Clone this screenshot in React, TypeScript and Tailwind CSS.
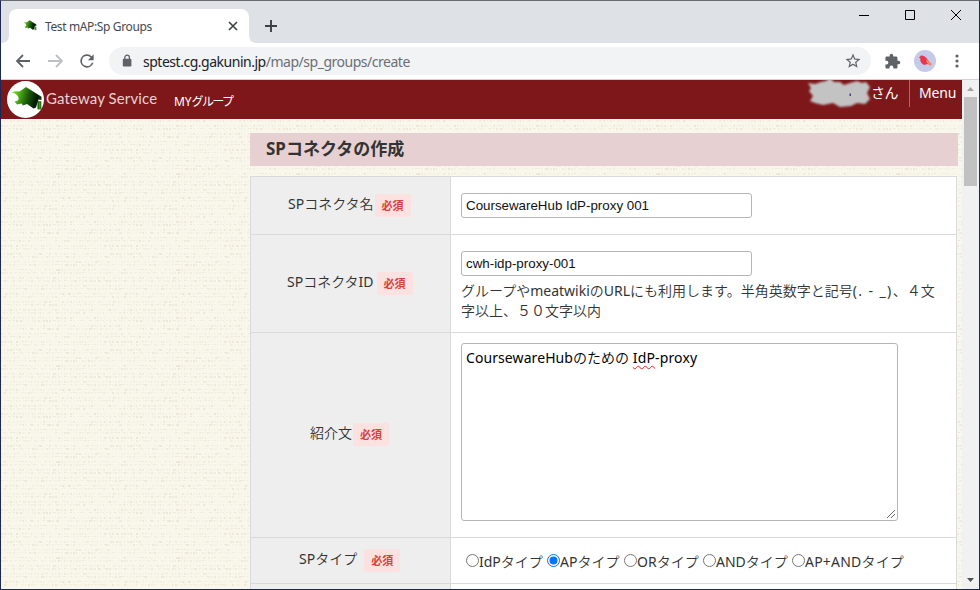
import type { ReactNode } from "react";

const jp = "font-['Noto_Sans','Noto_Sans_CJK_JP',sans-serif]";

// Latin runs stay at regular weight while the kana and kanji are drawn thinner.
function Mixed({ text, latin = "" }: { text: string; latin?: string }) {
  return (
    <>
      {text.split(/([ -~]+)/).map((part, i) =>
        i % 2 ? <span key={i} className={`font-normal ${latin}`}>{part}</span> : part,
      )}
    </>
  );
}

function Cap({ className = "" }: { className?: string }) {
  return (
    <svg viewBox="0 0 32 26" className={className}>
      <defs>
        <linearGradient id="cap" x1="0" x2="1" y1="0.3" y2="0.5">
          <stop offset="0" stopColor="#8ae62a" />
          <stop offset="0.25" stopColor="#4fae16" />
          <stop offset="0.55" stopColor="#1c5c0c" />
          <stop offset="0.85" stopColor="#031a06" />
          <stop offset="1" stopColor="#0d380c" />
        </linearGradient>
        <linearGradient id="tassel">
          <stop offset="0" stopColor="#0b3d0b" />
          <stop offset="0.6" stopColor="#3fa31a" />
          <stop offset="1" stopColor="#0d4a0d" />
        </linearGradient>
      </defs>
      <path
        d="M0.500 5.500Q4 3.500 8.500 4.500L15 0L30.500 9.700V13L27.500 12.500L25 20.500L22.500 21.500L16 17L12 18.500L10.500 16.500L6 17.500L3.500 14.500Q8.500 14 7.500 10.500Q5.500 5.800 0.500 5.500Z"
        fill="url(#cap)"
      />
      <rect x="26.500" y="14" width="3.800" height="8.500" rx="1" fill="url(#tassel)" />
    </svg>
  );
}

function TitleBar() {
  return (
    <div className="flex h-[42px] shrink-0 bg-[#dee1e6]">
      <div className="flex h-full items-end">
        <svg width="8" height="8"><path d="M8 0V8H0Q8 8 8 0Z" fill="#fff" /></svg>
      </div>
      <div className="mt-2 flex h-[34px] w-[240px] items-center rounded-t-lg bg-white pl-[14px] pr-[11px]">
        <Cap className="mr-[8px] h-[12px] w-[14px]" />
        <span className="flex-1 whitespace-nowrap pt-px font-['Noto_Sans'] text-[12px] tracking-[-0.37px] text-[#45494d]">
          Test mAP:Sp Groups
        </span>
        <svg width="10" height="10" stroke="#3c4043" strokeWidth="1.6"><path d="M1 1L9 9M9 1L1 9" /></svg>
      </div>
      <div className="flex h-full items-end">
        <svg width="8" height="8"><path d="M0 0V8H8Q0 8 0 0Z" fill="#fff" /></svg>
      </div>
      <svg width="12" height="12" className="ml-[8px] mt-[19px]" stroke="#3c4043" strokeWidth="1.9"><path d="M6 0V12M0 6H12" /></svg>
      <div className="flex-1" />
      <svg width="102" height="12" viewBox="-2 0 102 12" className="mr-[18px] mt-[8px]" fill="none" stroke="#000">
        <path d="M-2 6.5H8M44.5 1.5h9v9h-9zM90 1L100 11M100 1L90 11" />
      </svg>
    </div>
  );
}

function AddressBar() {
  return (
    <div className="flex h-[37px] shrink-0 items-center border-b border-[#d0d2d5] bg-white">
      <svg width="76" height="16" className="ml-[14px]" fill="none" strokeWidth="1.8">
        <path d="M15 8H2.5M8 2L2 8L8 14" stroke="#5f6368" />
        <path d="M33 8H46.5M41 2L47 8L41 14" stroke="#bdbfc1" />
      </svg>
      <svg width="20" height="20" viewBox="0 0 24 24" fill="#5f6368" className="-ml-[14px]">
        <path d="M17.65 6.35A8 8 0 1 0 19.73 14h-2.08A6 6 0 1 1 12 6c1.66 0 3.14.69 4.22 1.78L13 11h7V4z" />
      </svg>
      <div className="ml-[12px] flex h-[28px] w-[762px] items-center rounded-full bg-[#f1f3f4] pl-[12px] pr-[9px]">
        <svg width="12" height="14" viewBox="0 0 12 14">
          <rect x="1.8" y="4.8" width="8.6" height="7.6" rx="1" fill="#5f6368" />
          <path d="M3.8 5V3.5a2.3 2.3 0 0 1 4.6 0V5" fill="none" stroke="#5f6368" strokeWidth="1.3" />
        </svg>
        <span className="ml-[10px] flex-1 whitespace-nowrap font-['Noto_Sans'] text-[14px] tracking-[-0.48px] text-[#202124]">
          sptest.cg.gakunin.jp<span className="text-[#6b6f74]">/map/sp_groups/create</span>
        </span>
        <svg width="18" height="18" viewBox="0 0 24 24" fill="#5f6368">
          <path d="M22 9.24l-7.19-.62L12 2 9.19 8.63 2 9.24l5.46 4.73L5.82 21 12 17.27 18.18 21l-1.63-7.03L22 9.24zM12 15.4l-3.76 2.27 1-4.28-3.32-2.88 4.38-.38L12 6.1l1.71 4.04 4.38.38-3.32 2.88 1 4.28L12 15.4z" />
        </svg>
      </div>
      <svg width="17" height="17" viewBox="0 0 24 24" fill="#5f6368" className="ml-[13px]">
        <path d="M20.5 11H19V7c0-1.1-.9-2-2-2h-4V3.500a2.500 2.500 0 0 0-5 0V5H4c-1.100 0-2 .9-2 2v3.800h1.500a2.700 2.700 0 0 1 0 5.400H2V20c0 1.100.9 2 2 2h3.800v-1.500a2.700 2.700 0 0 1 5.400 0V22H17c1.100 0 2-.9 2-2v-4h1.500a2.500 2.500 0 0 0 0-5z" />
      </svg>
      <svg width="22" height="22" viewBox="0 0 22 22" className="ml-[13px]">
        <circle cx="11" cy="11" r="11" fill="#c5cae9" />
        <path d="M5 7.500L7 5.500Q10 5 12.500 8L15 11.500L17.500 14L16.500 15.500L14 14L10 15Q6 13 6.300 8.500Z" fill="#e8354d" />
        <path d="M12 9L17.500 14L16.500 15.500L13 13Z" fill="#ff8a50" />
      </svg>
      <svg width="4" height="14" className="ml-[19px]" fill="#5f6368">
        <circle cx="2" cy="2" r="1.600" /><circle cx="2" cy="7" r="1.600" /><circle cx="2" cy="12" r="1.600" />
      </svg>
    </div>
  );
}

function SiteHeader() {
  return (
    <header className="flex h-[39px] shrink-0 bg-[#7d171a] text-white">
      <div className="ml-[6px] mt-px flex h-[37px] w-[37px] items-start justify-center rounded-full bg-white">
        <Cap className="ml-[3px] mt-[6px] h-[26px] w-[32px] shrink-0" />
      </div>
      <span className="ml-[2px] mt-[8px] w-[112px] whitespace-nowrap font-[Lato] text-[15px] leading-5 tracking-[0.12px] text-[#e8d2d2]">
        Gateway Service
      </span>
      <span className={`ml-[16px] mt-[12px] whitespace-nowrap text-[12px] leading-5 tracking-[-0.1px] ${jp}`}>
        MY<span className="tracking-[-1.6px]">グループ</span>
      </span>
      <div className="flex-1" />
      <svg width="66" height="32" viewBox="0 0 66 32" className="relative z-10 -mt-px overflow-visible">
        <defs>
          <filter id="soft"><feGaussianBlur stdDeviation="0.9" /></filter>
        </defs>
        <path
          filter="url(#soft)"
          fill="#c3c3c3"
          d="M2 4L9 5L15 3L20 2L24 -1L28 3L34 3L38 6L44 4L51 2L56 4L60 3L64 8L61 14L64 20L59 25L51 24L45 27L34 28L27 24L17 26L9 24L4 22L7 17L3 12L5 9Z"
        />
        <rect x="43.500" y="14.500" width="1.500" height="2.500" fill="#43418a" />
      </svg>
      <span className={`-ml-px mt-[3px] whitespace-nowrap text-[14px] leading-5 tracking-[-0.5px] ${jp}`}>さん</span>
      <div className="ml-[11px] h-[27px] w-px bg-[#aa6a6c]" />
      <span className={`ml-[9px] mr-[6px] mt-[3px] w-[37px] whitespace-nowrap text-[14px] leading-5 tracking-[-0.2px] ${jp}`}>Menu</span>
    </header>
  );
}

function Required({ className = "" }: { className?: string }) {
  return (
    <span className={`flex h-[23px] w-[36px] items-center justify-center rounded-[3px] bg-[#fce1e1] pt-px text-[11px] font-semibold text-[#d9403c] ${jp} ${className}`}>
      必須
    </span>
  );
}

function Row({ label, height, pad, gap = "ml-px", children }: {
  label: string; height: string; pad: string; gap?: string; children?: ReactNode;
}) {
  return (
    <div className={`flex shrink-0 border-b border-[#dadada] ${height}`}>
      <div className={`flex w-[200px] shrink-0 items-start border-r border-[#dadada] bg-[#eeeeee] ${pad}`}>
        <span className="whitespace-nowrap leading-5"><Mixed text={label} /></span>
        <Required className={gap} />
      </div>
      <div className="min-w-0 flex-1 bg-white pl-[10px]">{children}</div>
    </div>
  );
}

function Field({ value, className }: { value: string; className: string }) {
  return (
    <input
      readOnly
      value={value}
      className={`block h-[25px] w-[291px] rounded-[3px] border border-[#b5b5b5] bg-white px-1 font-['Liberation_Sans'] text-[13.33px] font-normal text-[#111] outline-none ${className}`}
    />
  );
}

function Radio({ label, on, className }: { label: string; on?: boolean; className: string }) {
  return (
    <label className={`flex items-start whitespace-nowrap ${className}`}>
      <svg width="13" height="13" className="mt-[3px] shrink-0">
        <circle cx="6.500" cy="6.500" r="6" fill="#fff" stroke={on ? "#0075ff" : "#767676"} />
        {on && <circle cx="6.500" cy="6.500" r="4" fill="#0075ff" />}
      </svg>
      <span className="pt-px"><Mixed text={label} /></span>
    </label>
  );
}

function Scrollbar() {
  return (
    <div className="flex w-[17px] shrink-0 flex-col items-center bg-[#f1f1f1]">
      <svg width="17" height="17"><path d="M5 11L8.500 7L12 11Z" fill="#a3a3a3" /></svg>
      <div className="h-[89px] w-[13px] bg-[#c1c1c1]" />
      <div className="flex-1" />
      <svg width="17" height="17"><path d="M5 6L8.500 10L12 6Z" fill="#505050" /></svg>
    </div>
  );
}

// Deterministic noise gives the linen its uneven threads.
const noise = (n: number) => {
  const v = Math.sin(n * 127.1 + 11.7) * 43758.5453;
  return v - Math.floor(v);
};

const threads = Array.from({ length: 24 * 40 }, (_, i) => {
  const col = i % 40;
  const row = Math.floor(i / 40);
  return {
    x: col * 3 + (noise(i) > 0.8 ? 1 : 0),
    y: row * 4 + (row % 2),
    w: noise(i + 999) > 0.4 ? 2 : 1,
    h: noise(i + 555) > 0.5 ? 2 : 1,
    o: 0.15 + noise(i + 777) * 0.7,
  };
});

function Linen() {
  return (
    <svg className="absolute inset-0 h-full w-full" shapeRendering="crispEdges">
      <defs>
        <pattern id="weave" width="120" height="96" patternUnits="userSpaceOnUse">
          {threads.map((t, i) => (
            <rect key={i} x={t.x} y={t.y} width={t.w} height={t.h} opacity={t.o} fill="#ebe3d3" />
          ))}
        </pattern>
      </defs>
      <rect width="100%" height="100%" fill="url(#weave)" />
    </svg>
  );
}

export default function App() {
  return (
    <div className="flex h-[590px] w-[980px] flex-col overflow-hidden border border-[#1d2951] border-t-[#686b70]">
      <TitleBar />
      <AddressBar />
      <div className="flex min-h-0 flex-1">
        <div className="relative flex min-w-0 flex-1 flex-col overflow-hidden bg-[#f9f6eb]">
          <Linen />
          <div className="relative flex min-h-0 flex-1 flex-col">
            <SiteHeader />
            <main className={`ml-[249px] flex w-[708px] flex-col text-[14px] font-[350] text-[#333] ${jp}`}>
              <h1 className="mt-[14px] h-[33px] whitespace-nowrap bg-[#e6d0d1] pl-[16px] text-[17px] font-bold leading-[31px]">
                SPコネクタの作成
              </h1>
              <div className="mt-[10px] flex w-[707px] flex-col border border-b-0 border-[#dadada]">
                <Row label="SPコネクタ名" height="h-[58px]" pad="pl-[37px] pt-[17px]">
                  <Field value="CoursewareHub IdP-proxy 001" className="mt-[16px]" />
                </Row>
                <Row label="SPコネクタID" height="h-[98px]" pad="pl-[36px] pt-[37px]" gap="ml-[3px]">
                  <Field value="cwh-idp-proxy-001" className="mt-[16px]" />
                  <p className="mt-[5px] whitespace-nowrap leading-5">
                    <Mixed text="グループやmeatwikiのURLにも利用します。半角英数字と記号" />
                    <Mixed text="(. - _)" latin="tracking-[1.4px]" />、４文<br />
                    字以上、５０文字以内
                  </p>
                </Row>
                <Row label="紹介文" height="h-[205px]" pad="pl-[59px] pt-[90px]">
                  <div className="mt-[10px] flex h-[178px] w-[437px] rounded-[3px] border border-[#b5b5b5] bg-white pl-1 pt-[4px] text-black">
                    <span className="whitespace-nowrap leading-5">
                      <Mixed text="CoursewareHubのための " latin="tracking-[0.08px]" />
                      <span className="font-normal tracking-[0.15px]">
                        <span className="underline decoration-[#e02020] decoration-wavy decoration-1 underline-offset-[2px]">IdP</span>-proxy
                      </span>
                    </span>
                    <svg width="10" height="10" className="mb-px ml-auto mr-px self-end" stroke="#666"><path d="M1 9L9 1M5 9L9 5" /></svg>
                  </div>
                </Row>
                <Row label="SPタイプ" height="h-[46px]" pad="pl-[48px] pt-[11px]" gap="ml-[7px]">
                  <div className="flex pl-[5px] pt-[13px] leading-5">
                    <Radio label="IdPタイプ" className="w-[81px]" />
                    <Radio label="APタイプ" on className="w-[77px]" />
                    <Radio label="ORタイプ" className="w-[79px]" />
                    <Radio label="ANDタイプ" className="w-[89px]" />
                    <Radio label="AP+ANDタイプ" className="w-[120px] tracking-[0.2px]" />
                  </div>
                </Row>
                <div className="flex h-[8px]"><div className="w-[200px] border-r border-[#dadada] bg-[#eee]" /><div className="flex-1 bg-white" /></div>
              </div>
            </main>
          </div>
        </div>
        <Scrollbar />
      </div>
    </div>
  );
}
